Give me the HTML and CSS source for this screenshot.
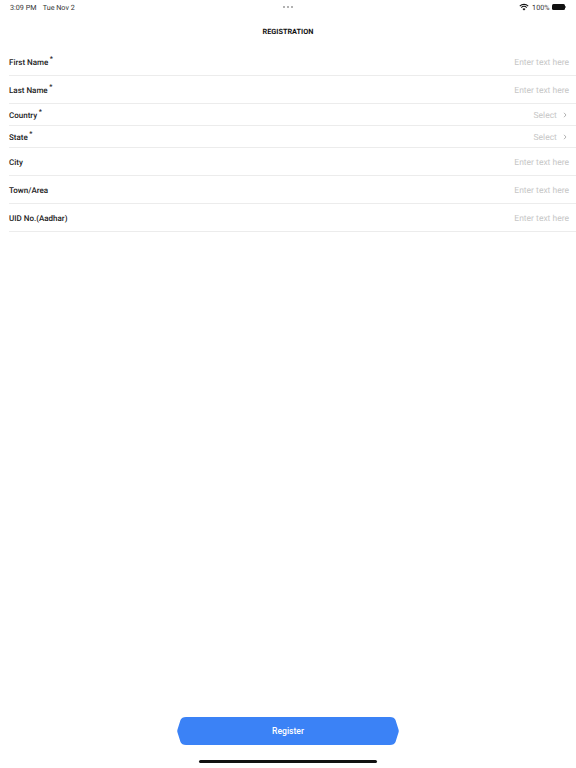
FILE: index.html
```html
<!DOCTYPE html>
<html lang="en">
<head>
    <meta charset="UTF-8">
    <meta name="viewport" content="width=device-width, initial-scale=1.0">
    <title>Registration</title>
    <link rel="stylesheet" href="styles.css">
</head>
<body>

<div class="page">
    <div class="status-bar">
        <div class="status-time">3:09 PM <span class="status-date">Tue Nov 2</span></div>
        <div class="status-dots"><i></i><i></i><i></i></div>
        <div class="status-right">
            <svg class="wifi" width="10" height="8" viewBox="0 0 10 8">
                <path d="M5 7.6 3.5 5.9a2.2 2.2 0 0 1 3 0z" fill="#111"/>
                <path d="M2.6 5a3.5 3.5 0 0 1 4.8 0l.7-.8a4.6 4.6 0 0 0-6.2 0z" fill="#111"/>
                <path d="M1.2 3.5a5.6 5.6 0 0 1 7.6 0l.8-.8a6.7 6.7 0 0 0-9.2 0z" fill="#111"/>
            </svg>
            <span class="battery-text">100%</span>
            <span class="battery"></span><span class="battery-tip"></span>
        </div>
    </div>

    <h1 class="title">REGISTRATION</h1>

    <div class="form">
        <div class="row">
            <label>First Name<sup>*</sup></label>
            <span class="placeholder">Enter text here</span>
        </div>
        <div class="row">
            <label>Last Name<sup>*</sup></label>
            <span class="placeholder">Enter text here</span>
        </div>
        <div class="row row-select">
            <label>Country<sup>*</sup></label>
            <span class="placeholder">Select
                <svg class="chevron" width="4" height="6" viewBox="0 0 4 6"><path d="M1 .8 3 3 1 5.2" fill="none" stroke="#aaa" stroke-width=".9"/></svg>
            </span>
        </div>
        <div class="row row-select">
            <label>State<sup>*</sup></label>
            <span class="placeholder">Select
                <svg class="chevron" width="4" height="6" viewBox="0 0 4 6"><path d="M1 .8 3 3 1 5.2" fill="none" stroke="#aaa" stroke-width=".9"/></svg>
            </span>
        </div>
        <div class="row">
            <label>City</label>
            <span class="placeholder">Enter text here</span>
        </div>
        <div class="row">
            <label>Town/Area</label>
            <span class="placeholder">Enter text here</span>
        </div>
        <div class="row">
            <label>UID No.(Aadhar)</label>
            <span class="placeholder">Enter text here</span>
        </div>
    </div>

    <div class="footer">
        <button class="register">Register</button>
        <div class="home-bar"></div>
    </div>
</div>

</body>
</html>
```

FILE: styles.css
```css
* {
    box-sizing: border-box;
}
html, body {
    margin: 0;
    height: 100%;
}
body {
    font-family: Roboto, "Liberation Sans", sans-serif;
    background-color: white;
    color: #111;
    text-rendering: geometricPrecision;
}
.page {
    height: 768px;
    display: flex;
    flex-direction: column;
    overflow: hidden;
}
.status-bar {
    height: 14px;
    padding: 0 10px 0 10px;
    display: grid;
    grid-template-columns: 1fr auto 1fr;
    align-items: center;
    font-size: 7.2px;
    color: #333;
}
.status-date {
    margin-left: 4.500px;
}
.status-dots {
    display: flex;
    gap: 1.5px;
}
.status-dots i {
    width: 2.5px;
    height: 2.5px;
    border-radius: 50%;
    background-color: #999;
}
.status-right {
    display: flex;
    justify-content: flex-end;
    align-items: center;
}
.wifi {
    margin-right: 3px;
}
.battery {
    width: 13px;
    height: 6px;
    margin-left: 2px;
    background-color: #111;
    border-radius: 1.5px;
}
.battery-tip {
    width: 1px;
    height: 2.5px;
    margin-left: .5px;
    background-color: #888;
}
.title {
    margin: 0;
    height: 34px;
    padding-top: 1px;
    line-height: 34px;
    text-align: center;
    font-size: 7.3px;
    font-weight: 700;
    color: #111;
}
.form {
    margin-left: 9px;
}
.row {
    height: 28px;
    padding: 0 7px 0 0;
    display: flex;
    justify-content: space-between;
    align-items: center;
    border-bottom: 1px solid #ececec;
}
.row-select {
    height: 22px;
}
.row label {
    margin-top: 1px;
    font-size: 8px;
    font-weight: 500;
    color: #1a1a1a;
}
.row sup {
    font-size: 7px;
    line-height: 0;
    margin-left: 1.5px;
}
.placeholder {
    margin-top: 2px;
    font-size: 8.5px;
    color: #c6c6c6;
}
.chevron {
    margin-left: 4px;
    margin-right: 2px;
}
.footer {
    margin-top: auto;
    display: flex;
    flex-direction: column;
    align-items: center;
    padding-bottom: 5px;
}
.register {
    width: 222px;
    height: 28px;
    border: none;
    padding: 0;
    background-color: #3b82f6;
    color: white;
    font-family: Roboto, "Liberation Sans", sans-serif;
    font-size: 8.6px;
    font-weight: 500;
    clip-path: path("M9 0H213C216 0 217.500 1 218.500 3L221.500 12.500Q222 14 221.500 15.500L218.500 25C217.500 27 216 28 213 28H9C6 28 4.500 27 3.500 25L.5 15.500Q0 14 .5 12.500L3.500 3C4.500 1 6 0 9 0Z");
}
.home-bar {
    width: 178px;
    height: 3px;
    margin-top: 15px;
    background-color: #111;
    border-radius: 2px;
}
```
